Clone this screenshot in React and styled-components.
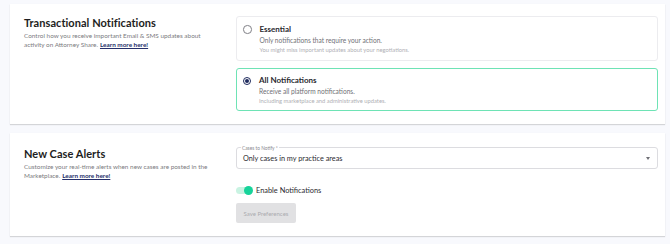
import React from "react";
import styled, { createGlobalStyle } from "styled-components";

const Global = createGlobalStyle`
  html, body { margin: 0; padding: 0; background: #f8f9fd; }
  body { font-family: Lato, "Open Sans", Arial, sans-serif; -webkit-font-smoothing: antialiased; }
  * { box-sizing: border-box; }
`;

const Page = styled.div`
  display: flex;
  flex-direction: column;
  gap: 9px;
  padding: 4px 5px 8px 10px;
  width: 670px;
  height: 244px;
`;

const Card = styled.section`
  background: #fff;
  box-shadow: 0 1px 1px rgba(0, 0, 0, 0.14), 0 0 1px rgba(0, 0, 0, 0.04);
  display: grid;
  grid-template-columns: 212px 1fr;
  padding: ${(p) => p.$pad};
`;

const Intro = styled.div`
  display: flex;
  flex-direction: column;
  padding-right: 14px;
`;

const Title = styled.h2`
  margin: 0;
  font-size: 11px;
  line-height: 13px;
  font-weight: 700;
  color: #1d1d22;
  letter-spacing: 0.05px;
`;

const Desc = styled.div`
  margin: 2px 0 0;
  display: flex;
  flex-direction: column;
  font-size: 6.4px;
  line-height: 9px;
  color: #7b7b80;
`;

const DescLine = styled.div`
  display: flex;
  gap: 2px;
  white-space: nowrap;
`;

const Link = styled.a`
  color: #26306a;
  font-weight: 700;
  text-decoration: underline;
  text-underline-offset: 1px;
`;

const Options = styled.div`
  display: flex;
  flex-direction: column;
  gap: 7px;
`;

const Option = styled.label`
  display: flex;
  gap: 8px;
  align-items: flex-start;
  border: ${(p) => (p.$active ? "1.5px solid #6ee3b5" : "1px solid #ececef")};
  border-radius: 3px;
  padding: ${(p) => (p.$active ? "6px 8px 6px 5.5px" : "6.5px 8px 7px 6px")};
  height: ${(p) => p.$h}px;
`;

const Radio = styled.span`
  flex: none;
  width: 8.5px;
  height: 8.5px;
  margin-top: 1.5px;
  border-radius: 50%;
  border: 1px solid ${(p) => (p.$on ? "#1f2b5e" : "#808086")};
  display: flex;
  align-items: center;
  justify-content: center;
  &::after {
    content: "";
    width: 4.5px;
    height: 4.5px;
    border-radius: 50%;
    background: ${(p) => (p.$on ? "#1f2b5e" : "transparent")};
  }
`;

const OptText = styled.div`
  display: flex;
  flex-direction: column;
`;

const OptTitle = styled.div`
  font-size: 8px;
  line-height: 11px;
  font-weight: 700;
  color: #2a2a30;
`;

const OptSub = styled.div`
  margin-top: 1px;
  font-size: 6.6px;
  line-height: 9px;
  color: #707076;
`;

const OptNote = styled.div`
  font-size: 5.8px;
  line-height: 9px;
  color: #b0b0b5;
`;

const Controls = styled.div`
  display: flex;
  flex-direction: column;
  align-items: flex-start;
`;

const SelectBox = styled.div`
  position: relative;
  width: 100%;
  height: 22px;
  border: 1px solid #dcdce0;
  border-radius: 3px;
  display: flex;
  align-items: center;
  padding: 0 6px;
  font-size: 7.3px;
  color: #2a2a30;
`;

const FloatLabel = styled.span`
  position: absolute;
  left: 4px;
  top: -3px;
  padding: 0 1px;
  background: #fff;
  font-size: 4.8px;
  line-height: 6px;
  color: #8a8a90;
`;

const Caret = styled.span`
  margin-left: auto;
  width: 0;
  height: 0;
  border-left: 2.5px solid transparent;
  border-right: 2.5px solid transparent;
  border-top: 3px solid #707076;
  margin-right: 1px;
`;

const ToggleRow = styled.div`
  display: flex;
  align-items: center;
  gap: 4px;
  margin-top: 16px;
  height: 10px;
  font-size: 7.4px;
  color: #2a2a30;
`;

const Switch = styled.span`
  position: relative;
  width: 16px;
  height: 7px;
  border-radius: 4px;
  background: #c9f3e2;
  &::after {
    content: "";
    position: absolute;
    right: -1px;
    top: -1px;
    width: 9px;
    height: 9px;
    border-radius: 50%;
    background: #16d39a;
  }
`;

const Button = styled.button`
  margin-top: 8px;
  width: 60px;
  height: 20px;
  border: none;
  border-radius: 2px;
  background: #e1e1e3;
  color: #ababaf;
  font-family: inherit;
  font-size: 6px;
  padding: 0;
`;

export default function App() {
  return (
    <>
      <Global />
      <Page>
        <Card $pad="12px 7px 13px 14px">
          <Intro>
            <Title>Transactional Notifications</Title>
            <Desc>
              <DescLine>Control how you receive important Email &amp; SMS updates about</DescLine>
              <DescLine>
                <span>activity on Attorney Share.</span>
                <Link>Learn more here!</Link>
              </DescLine>
            </Desc>
          </Intro>
          <Options>
            <Option $h={45}>
              <Radio />
              <OptText>
                <OptTitle>Essential</OptTitle>
                <OptSub>Only notifications that require your action.</OptSub>
                <OptNote>You might miss important updates about your negotiations.</OptNote>
              </OptText>
            </Option>
            <Option $active $h={43}>
              <Radio $on />
              <OptText>
                <OptTitle>All Notifications</OptTitle>
                <OptSub>Receive all platform notifications.</OptSub>
                <OptNote>Including marketplace and administrative updates.</OptNote>
              </OptText>
            </Option>
          </Options>
        </Card>
        <Card $pad="14px 7px 13px 14px">
          <Intro>
            <Title>New Case Alerts</Title>
            <Desc>
              <DescLine>Customize your real-time alerts when new cases are posted in the</DescLine>
              <DescLine>
                <span>Marketplace.</span>
                <Link>Learn more here!</Link>
              </DescLine>
            </Desc>
          </Intro>
          <Controls>
            <SelectBox>
              <FloatLabel>Cases to Notify *</FloatLabel>
              Only cases in my practice areas
              <Caret />
            </SelectBox>
            <ToggleRow>
              <Switch />
              Enable Notifications
            </ToggleRow>
            <Button>Save Preferences</Button>
          </Controls>
        </Card>
      </Page>
    </>
  );
}
